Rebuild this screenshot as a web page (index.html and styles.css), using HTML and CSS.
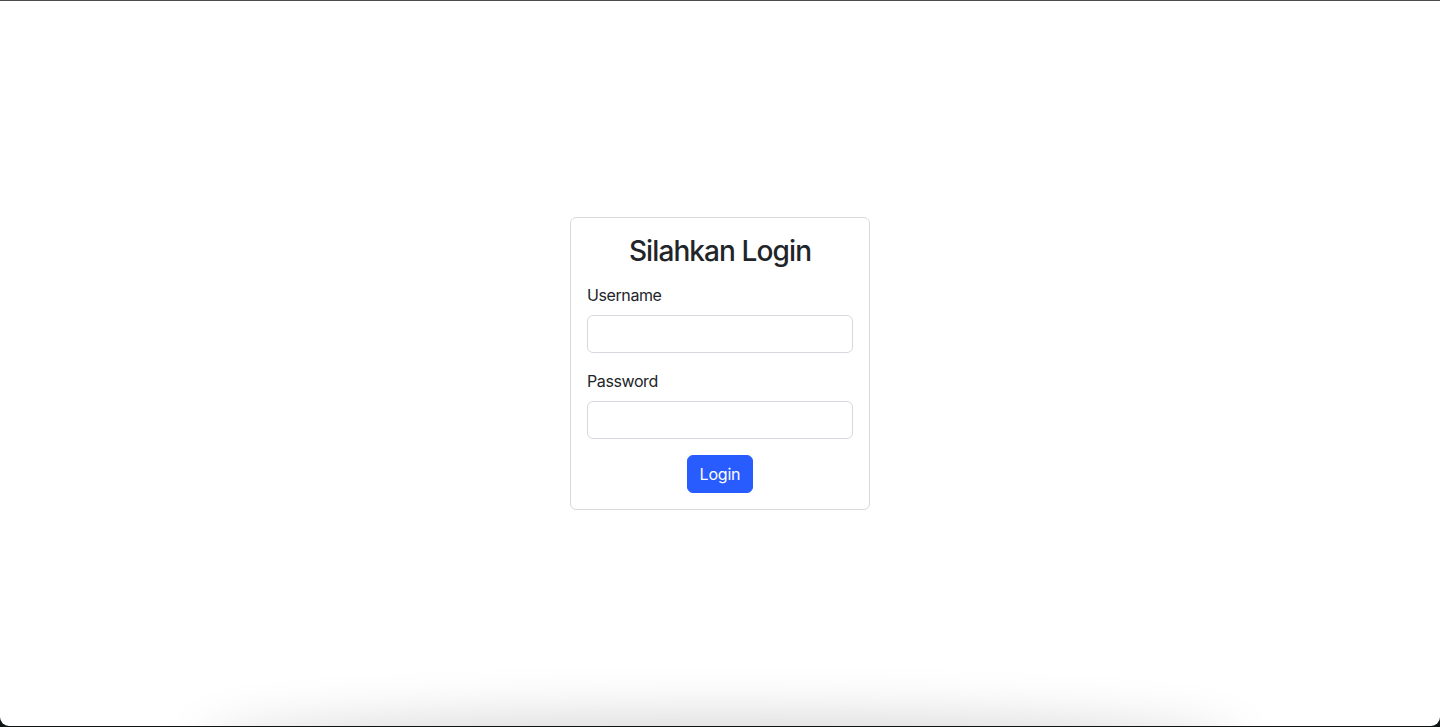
FILE: index.html
```html
<!DOCTYPE html>
<html lang="id">
<head>
<meta charset="utf-8">
<title>Login</title>
<link rel="stylesheet" href="styles.css">
</head>
<body>
<div class="window">
  <div class="shade"></div>
  <main class="page">
    <form class="card">
      <h3 class="title">Silahkan Login</h3>
      <div class="field">
        <label class="label" for="username">Username</label>
        <input class="input" id="username" type="text">
      </div>
      <div class="field">
        <label class="label" for="password">Password</label>
        <input class="input" id="password" type="password">
      </div>
      <div class="actions">
        <button class="btn" type="button">Login</button>
      </div>
    </form>
  </main>
</div>
</body>
</html>
```

FILE: styles.css
```css
html, body {
  margin: 0;
  padding: 0;
  background: #0f1414;
  height: 727px;
  overflow: hidden;
}
body {
  font-family: Inter, "Helvetica Neue", Arial, sans-serif;
  color: #212529;
  font-size: 16px;
  line-height: 1.5;
  letter-spacing: -0.4px;
}
.window {
  position: relative;
  height: 726px;
  box-sizing: border-box;
  background: #fff;
  border-top: 1px solid #4d4d4d;
  border-radius: 0 0 9px 9px;
  overflow: hidden;
}
.shade {
  position: absolute;
  left: 210px;
  right: 210px;
  bottom: -40px;
  height: 40px;
  box-shadow: 0 0 50px 12px rgba(0, 0, 0, 0.15);
  border-radius: 50%;
}
.page {
  height: 100%;
  display: flex;
  align-items: center;
  justify-content: center;
}
.card {
  width: 300px;
  box-sizing: border-box;
  border: 1px solid #d8dadd;
  border-radius: 6px;
  padding: 16px;
  background: #fff;
  position: relative;
}
.title {
  margin: 0 0 16px;
  font-size: 28px;
  font-weight: 500;
  line-height: 1.2;
  letter-spacing: -0.9px;
  text-align: center;
  color: #212529;
  position: relative;
  top: 1px;
}
.field {
  margin-bottom: 16px;
}
.label {
  display: block;
  margin-bottom: 8px;
}
.input {
  display: block;
  width: 100%;
  box-sizing: border-box;
  height: 38px;
  padding: 6px 12px;
  font: inherit;
  border: 1px solid #d5d8dc;
  border-radius: 6px;
  background: #fff;
}
.actions {
  display: flex;
  justify-content: center;
}
.btn {
  font: inherit;
  letter-spacing: -0.2px;
  color: #fff;
  background: #295cff;
  border: 1px solid #295cff;
  border-radius: 6px;
  height: 38px;
  padding: 6px 12px;
  cursor: pointer;
}
```
